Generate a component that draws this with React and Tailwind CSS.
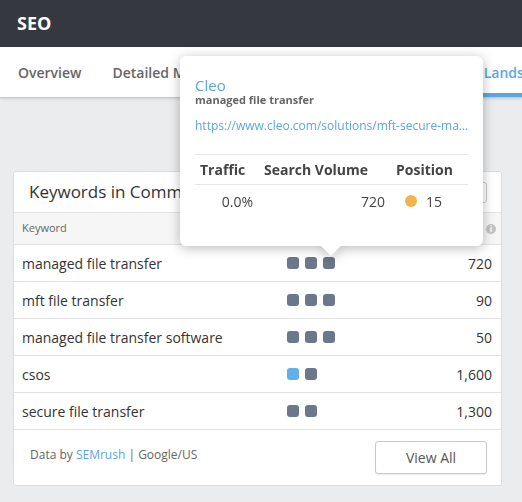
const rows = [
  { keyword: 'managed file transfer', dots: ['g', 'g', 'g'], volume: '720' },
  { keyword: 'mft file transfer', dots: ['g', 'g', 'g'], volume: '90' },
  { keyword: 'managed file transfer software', dots: ['g', 'g', 'g'], volume: '50' },
  { keyword: 'csos', dots: ['b', 'g'], volume: '1,600' },
  { keyword: 'secure file transfer', dots: ['g', 'g'], volume: '1,300' },
];

const tabs = ['Overview', 'Detailed Metrics', 'Organic Search', 'Competitive Landscape'];

function Tooltip() {
  return (
    <div className="absolute left-[180px] top-[56px] w-[303px] drop-shadow-[0_2px_6px_rgba(0,0,0,0.28)]">
      <div className="h-[190px] rounded-[6px] bg-white px-[15px] pt-[20px]">
        <p className="text-[15px] leading-[18px] text-[#5aa7e0]">Cleo</p>
        <p className="text-[11px] font-bold leading-[12px] text-[#666]">managed file transfer</p>
        <p className="mt-[12px] w-[275px] truncate text-[12px] leading-[16px] text-[#5aa7e0]">
          https://www.cleo.com/solutions/mft-secure-managed-file-transfer
        </p>
        <div className="mt-[20px] border-t border-[#e6e6e6]">
          <div className="flex h-[30px] items-center border-b border-[#e6e6e6] text-[14px] font-bold text-[#444]">
            <span className="w-[63px] pl-[5px]">Traffic</span>
            <span className="w-[132px] pl-[6px]">Search Volume</span>
            <span className="w-[78px] pl-[6px]">Position</span>
          </div>
          <div className="flex h-[32px] items-center text-[14px] text-[#444]">
            <span className="w-[63px] pr-[5px] text-right">0.0%</span>
            <span className="w-[132px] pr-[5px] text-right">720</span>
            <span className="flex w-[78px] items-center gap-[9px] pl-[15px]">
              <span className="h-[12px] w-[12px] rounded-full bg-[#f0b44c]" />
              15
            </span>
          </div>
        </div>
      </div>
      <div className="ml-[141px] h-[10px] w-[20px] bg-white [clip-path:polygon(0_0,100%_0,50%_100%)]" />
    </div>
  );
}

export default function App() {
  return (
    <div className="relative h-[502px] w-[522px] overflow-hidden bg-[#ebecee] font-['Open_Sans',sans-serif]">
      <header className="flex h-[47px] items-center bg-[#35383f] px-[17px]">
        <h1 className="text-[18px] font-bold text-white">SEO</h1>
      </header>

      <nav className="flex h-[51px] gap-[31px] overflow-hidden whitespace-nowrap border-b border-[#c8c8c8] bg-white px-[18px] shadow-[0_1px_3px_rgba(0,0,0,0.12)]">
        {tabs.map((t, i) => (
          <div
            key={t}
            className={`flex h-full items-center border-b-4 pt-[4px] text-[14px] font-semibold ${
              i === tabs.length - 1 ? 'ml-[11px] border-[#5ba8e0] text-[#5ba8e0]' : 'border-transparent text-[#666]'
            }`}
          >
            {t}
          </div>
        ))}
      </nav>

      <main className="px-[13px] pt-[73px]">
        <section className="w-[489px] overflow-hidden rounded-[3px] border border-[#dcdcdc] bg-white">
          <div className="flex h-[41px] items-center justify-between border-b border-[#e2e2e2] pl-[15px] pr-[14px]">
            <h2 className="text-[17px] text-[#333]">Keywords in Common</h2>
            <div className="h-[21px] w-[90px] rounded-[3px] border border-[#c9c9c9]" />
          </div>

          <div className="flex h-[32px] items-center border-b border-[#e2e2e2] bg-[#f6f6f7] pl-[8px] pr-[9px] text-[11px] text-[#666]">
            <span className="flex-1">Keyword</span>
            <span className="mr-[-4px] flex h-[10px] w-[10px] items-center justify-center rounded-full bg-[#c3c3c3] text-[8px] font-bold leading-none text-white">
              i
            </span>
          </div>

          {rows.map((r) => (
            <div
              key={r.keyword}
              className="flex h-[37px] items-center border-b border-[#e2e2e2] pl-[8px] pr-[9px] text-[14px] text-[#333]"
            >
              <span className="w-[265px]">{r.keyword}</span>
              <span className="flex flex-1 gap-[6px]">
                {r.dots.map((d, i) => (
                  <span
                    key={i}
                    className={`h-[12px] w-[12px] rounded-[3px] ${d === 'b' ? 'bg-[#62b0ea]' : 'bg-[#6b778a]'}`}
                  />
                ))}
              </span>
              <span className="text-right">{r.volume}</span>
            </div>
          ))}

          <div className="flex h-[55px] items-center justify-between pl-[16px] pr-[14px]">
            <p className="-mt-[6px] text-[12px] text-[#666]">
              Data by <span className="text-[#5aa7e0]">SEMrush</span> | Google/US
            </p>
            <button className="h-[33px] w-[112px] rounded-[3px] border border-[#c9c9c9] bg-white text-[14px] text-[#555] shadow-[0_1px_1px_rgba(0,0,0,0.08)]">
              View All
            </button>
          </div>
        </section>
      </main>

      <Tooltip />
    </div>
  );
}
